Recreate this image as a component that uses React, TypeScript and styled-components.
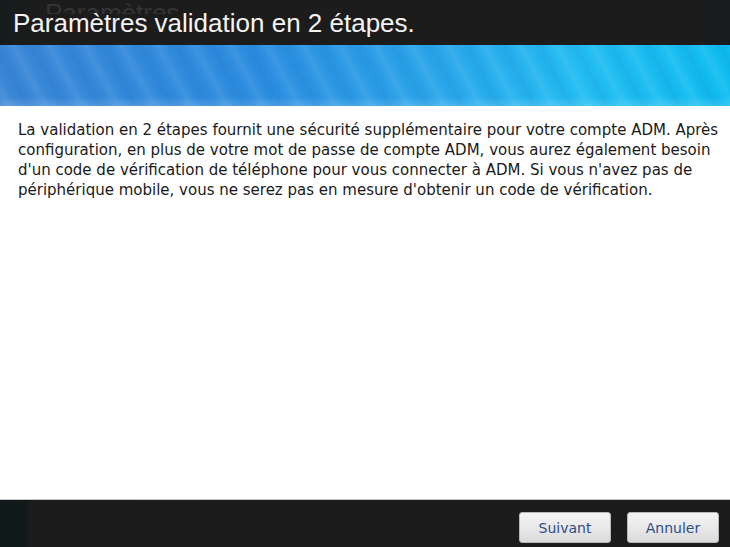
import styled, { createGlobalStyle } from "styled-components";

const Global = createGlobalStyle`
    html, body {
        margin: 0;
        padding: 0;
        background: #ffffff;
    }
    #root {
        width: 730px;
        height: 547px;
    }
`;

const Dialog = styled.div`
    width: 730px;
    height: 547px;
    display: flex;
    flex-direction: column;
    background: #ffffff;
    overflow: hidden;
`;

const Header = styled.div`
    position: relative;
    height: 45px;
    flex-shrink: 0;
    display: flex;
    align-items: center;
    padding-left: 13px;
    background: linear-gradient(
        to right,
        #151b1b 0px,
        #1b1d1d 28px,
        #1c1c1c 29px,
        #1c1c1c 704px,
        #181c1f 706px
    );
    overflow: hidden;
`;

// the page title behind the dialog, showing through above the dialog title
const Ghost = styled.span`
    position: absolute;
    left: 45px;
    top: 0;
    height: 14px;
    overflow: hidden;
    font-family: "Liberation Sans", Arial, sans-serif;
    font-size: 26px;
    line-height: 26px;
    color: #343434;
`;

const Title = styled.h1`
    position: relative;
    margin: 0;
    font-family: "Liberation Sans", Arial, sans-serif;
    font-weight: normal;
    font-size: 26px;
    color: #f4f4f4;
    padding-top: 1px;
`;

const Banner = styled.div`
    height: 61px;
    flex-shrink: 0;
    background:
        repeating-linear-gradient(
            62deg,
            rgba(255, 255, 255, 0) 0px,
            rgba(255, 255, 255, 0.08) 8px,
            rgba(255, 255, 255, 0) 16px,
            rgba(0, 40, 120, 0.06) 24px,
            rgba(255, 255, 255, 0) 32px
        ),
        linear-gradient(to bottom, rgba(255, 255, 255, 0) 85%, rgba(255, 255, 255, 0.15) 100%),
        linear-gradient(to right, #3a86d6 0%, #2c8de0 35%, #2aa6ea 60%, #22bdf2 80%, #0fbcf0 100%);
`;

const Body = styled.div`
    flex: 1;
    padding: 14px 0 0 18px;
    border-bottom: 1px solid #c8c8c8;
`;

const Text = styled.p`
    margin: 0;
    font-family: "DejaVu Sans", Verdana, sans-serif;
    font-size: 15px;
    line-height: 20px;
    color: #1a1a1a;
    white-space: nowrap;
`;

const Footer = styled.div`
    height: 47px;
    flex-shrink: 0;
    display: flex;
    justify-content: flex-end;
    align-items: flex-start;
    gap: 16px;
    padding: 12px 11px 0 0;
    box-sizing: border-box;
    background: linear-gradient(to right, #101a1a 0px, #111a1a 27px, #1b1b1b 28px, #1c1c1c 100%);
`;

const Button = styled.button`
    width: 92px;
    height: 31px;
    border: 1px solid #b8b8b8;
    border-radius: 3px;
    background: linear-gradient(to bottom, #f4f4f4 0%, #e6e6e6 60%, #dadada 100%);
    font-family: "DejaVu Sans", Verdana, sans-serif;
    font-size: 14px;
    color: #2e4d8c;
    cursor: pointer;
    padding: 0;
`;

const lines = [
    "La validation en 2 étapes fournit une sécurité supplémentaire pour votre compte ADM. Après",
    "configuration, en plus de votre mot de passe de compte ADM, vous aurez également besoin",
    "d'un code de vérification de téléphone pour vous connecter à ADM. Si vous n'avez pas de",
    "périphérique mobile, vous ne serez pas en mesure d'obtenir un code de vérification.",
];

function App() {
    return (
        <>
            <Global />
            <Dialog>
                <Header>
                    <Ghost>Paramètres</Ghost>
                    <Title>Paramètres validation en 2 étapes.</Title>
                </Header>
                <Banner />
                <Body>
                    <Text>
                        {lines.map((line, i) => (
                            <span key={i}>
                                {line}
                                <br />
                            </span>
                        ))}
                    </Text>
                </Body>
                <Footer>
                    <Button>Suivant</Button>
                    <Button>Annuler</Button>
                </Footer>
            </Dialog>
        </>
    );
}

export default App;
